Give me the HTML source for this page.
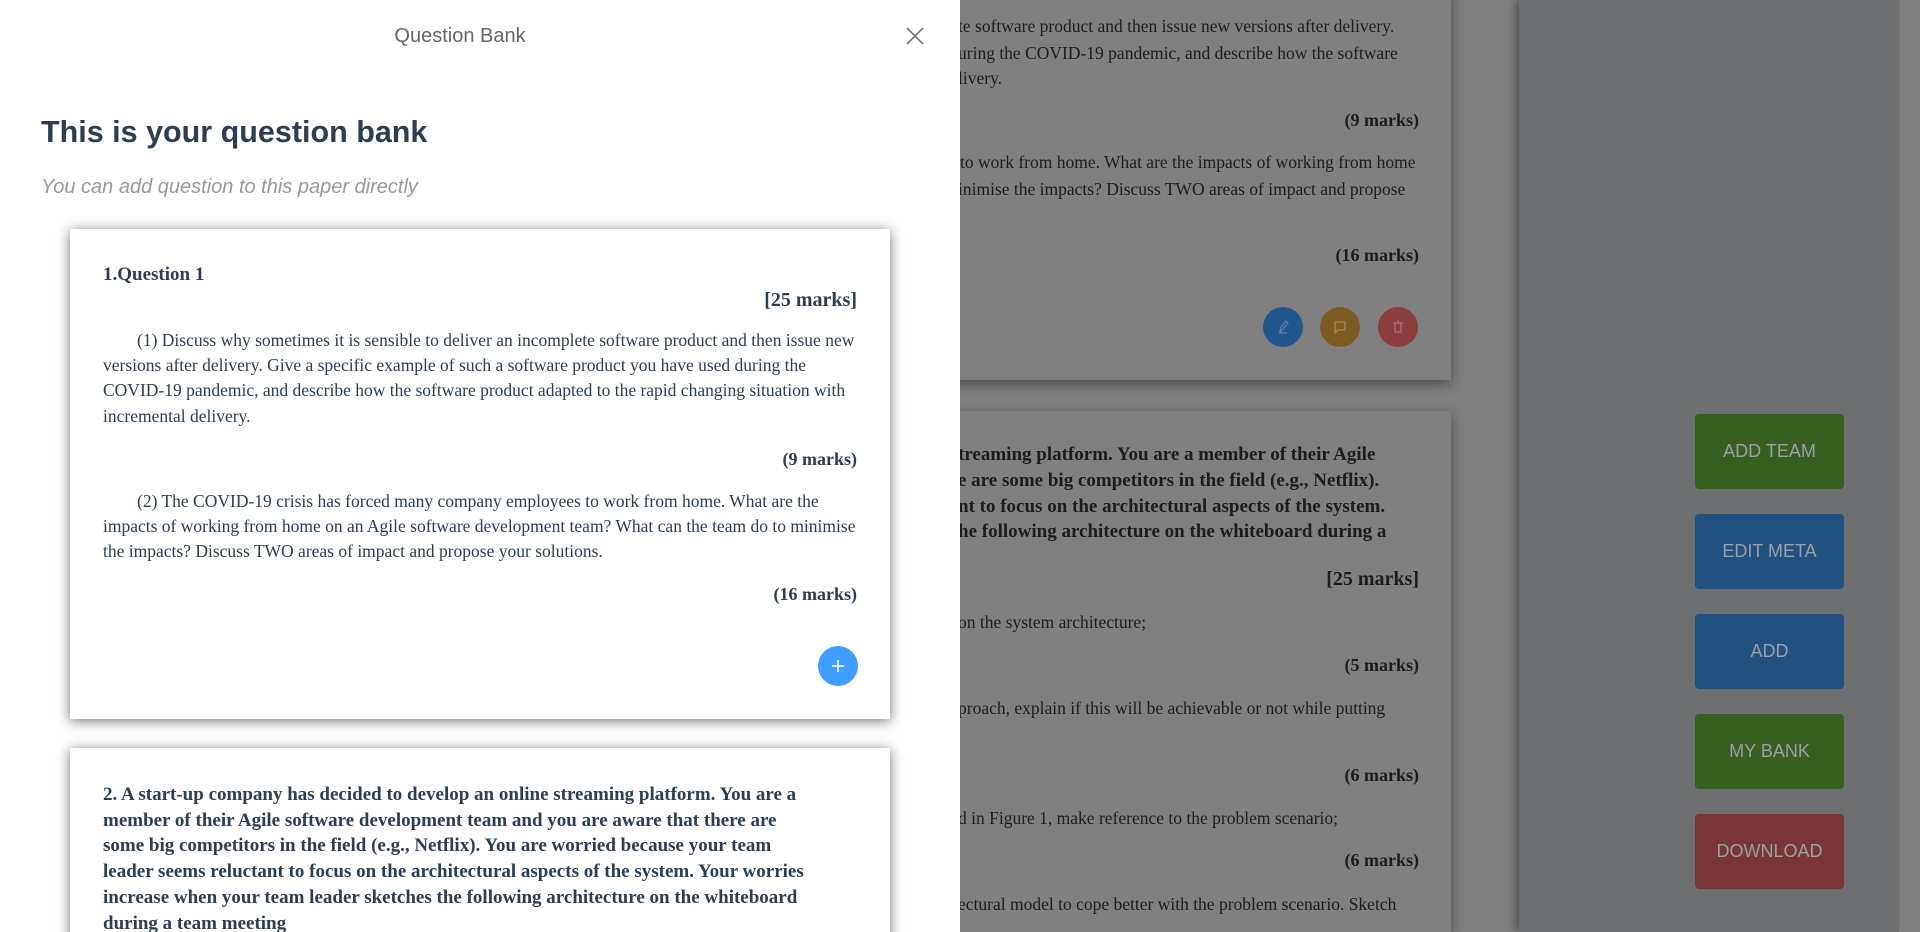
<!DOCTYPE html>
<html style="overflow:hidden;height:932px"><head><meta charset="utf-8"><style>
*{margin:0;padding:0;box-sizing:border-box}
body{width:1920px;height:932px;overflow:hidden;position:relative;background:#808080;font-family:"Liberation Serif",serif}
.abs{position:absolute;white-space:nowrap}
.dark{position:absolute;left:1519px;top:0;width:380px;height:932px;background:#6e6f71;box-shadow:-4px 0 8px rgba(0,0,0,.35)}
.paper{position:absolute;left:600px;width:851px;background:#808080;box-shadow:0 4px 12px rgba(0,0,0,.45)}
.pt{position:absolute;font-size:17.5px;color:#1c1c1c;white-space:nowrap}
.pb{font-weight:bold;font-size:18px}
.btn{position:absolute;left:1695px;width:149px;height:75px;border-radius:4px;color:#9aa0a6;font-family:"Liberation Sans",sans-serif;font-size:18px;display:flex;align-items:center;justify-content:center}
.circ{position:absolute;width:40px;height:40px;border-radius:50%;top:307px}
.modal{position:absolute;left:0;top:0;width:960px;height:932px;background:#fff;z-index:5;overflow:hidden}
.card{position:absolute;left:70px;width:820px;background:#fff;box-shadow:0 2px 12px rgba(0,0,0,.55)}
.ct{position:absolute;left:103px;font-size:17.5px;color:#2c3e50;white-space:nowrap}
</style></head><body>
<div class="dark"></div>
<div class="paper" style="top:-10px;height:390px"></div>
<div class="paper" style="top:411px;height:521px"></div>

<div class="pt" style="left:958px;top:16px">te software product and then issue new versions after delivery.</div>
<div class="pt" style="left:958px;top:43px">uring the COVID-19 pandemic, and describe how the software</div>
<div class="pt" style="left:958px;top:68px">livery.</div>
<div class="pt pb" style="right:501px;top:110px">(9 marks)</div>
<div class="pt" style="left:960px;top:152px">to work from home. What are the impacts of working from home</div>
<div class="pt" style="left:958px;top:179px">inimise the impacts? Discuss TWO areas of impact and propose</div>
<div class="pt pb" style="right:501px;top:245px">(16 marks)</div>
<div class="circ" style="left:1263px;background:#22568f"><svg width="40" height="40" viewBox="0 0 40 40"><path d="M17 25l1-5 5-6 2 2-5 6z M16 26h8" stroke="#5b7fa8" stroke-width="1.3" fill="none"/></svg></div>
<div class="circ" style="left:1320px;background:#7d5a22"><svg width="40" height="40" viewBox="0 0 40 40"><path d="M15 15h10v8h-7l-3 3z" stroke="#a88a50" stroke-width="1.3" fill="none"/></svg></div>
<div class="circ" style="left:1378px;background:#8c3e3e"><svg width="40" height="40" viewBox="0 0 40 40"><path d="M15 16h10M17 16v9h6v-9M19 14h2" stroke="#b07070" stroke-width="1.3" fill="none"/></svg></div>

<div class="pt pb" style="left:958px;top:444px;font-size:19px">treaming platform. You are a member of their Agile</div>
<div class="pt pb" style="left:958px;top:470px;font-size:19px">e are some big competitors in the field (e.g., Netflix).</div>
<div class="pt pb" style="left:958px;top:496px;font-size:19px">nt to focus on the architectural aspects of the system.</div>
<div class="pt pb" style="left:958px;top:521px;font-size:19px">he following architecture on the whiteboard during a</div>
<div class="pt pb" style="right:501px;top:568px;font-size:20px">[25 marks]</div>
<div class="pt" style="left:958px;top:612px">on the system architecture;</div>
<div class="pt pb" style="right:501px;top:655px">(5 marks)</div>
<div class="pt" style="left:958px;top:698px">proach, explain if this will be achievable or not while putting</div>
<div class="pt pb" style="right:501px;top:765px">(6 marks)</div>
<div class="pt" style="left:958px;top:808px">d in Figure 1, make reference to the problem scenario;</div>
<div class="pt pb" style="right:501px;top:850px">(6 marks)</div>
<div class="pt" style="left:958px;top:894px">ectural model to cope better with the problem scenario. Sketch</div>

<div class="btn" style="top:414px;background:#356020">ADD TEAM</div>
<div class="btn" style="top:514px;background:#22507f">EDIT META</div>
<div class="btn" style="top:614px;background:#22507f">ADD</div>
<div class="btn" style="top:714px;background:#356020">MY BANK</div>
<div class="btn" style="top:814px;background:#7a3636">DOWNLOAD</div>

<div class="modal">
<div class="abs" style="left:0;width:920px;text-align:center;top:25px;font-family:'Liberation Sans',sans-serif;font-size:20px;color:#666">Question Bank</div>
<svg class="abs" style="left:905px;top:26px" width="20" height="20" viewBox="0 0 20 20"><path d="M2 2L18 18M18 2L2 18" stroke="#777" stroke-width="1.6"/></svg>
<div class="abs" style="left:41px;top:115px;font-family:'Liberation Sans',sans-serif;font-size:30.5px;font-weight:bold;color:#2c3e50">This is your question bank</div>
<div class="abs" style="left:41px;top:176px;font-family:'Liberation Sans',sans-serif;font-size:20px;font-style:italic;color:#999">You can add question to this paper directly</div>

<div class="card" style="top:229px;height:490px"></div>
<div class="ct" style="top:264px;font-weight:bold;font-size:19px">1.Question 1</div>
<div class="ct" style="left:auto;right:103px;top:289px;font-weight:bold;font-size:20px">[25 marks]</div>
<div class="ct" style="top:330px;left:137px">(1) Discuss why sometimes it is sensible to deliver an incomplete software product and then issue new</div>
<div class="ct" style="top:355px">versions after delivery. Give a specific example of such a software product you have used during the</div>
<div class="ct" style="top:380px">COVID-19 pandemic, and describe how the software product adapted to the rapid changing situation with</div>
<div class="ct" style="top:406px">incremental delivery.</div>
<div class="ct" style="left:auto;right:103px;top:449px;font-weight:bold;font-size:18px">(9 marks)</div>
<div class="ct" style="top:491px;left:137px">(2) The COVID-19 crisis has forced many company employees to work from home. What are the</div>
<div class="ct" style="top:516px">impacts of working from home on an Agile software development team? What can the team do to minimise</div>
<div class="ct" style="top:541px">the impacts? Discuss TWO areas of impact and propose your solutions.</div>
<div class="ct" style="left:auto;right:103px;top:584px;font-weight:bold;font-size:18px">(16 marks)</div>
<div class="abs" style="left:818px;top:646px;width:40px;height:40px;border-radius:50%;background:#409eff"><svg width="40" height="40" viewBox="0 0 40 40"><path d="M20 14v12M14 20h12" stroke="#fff" stroke-width="1.6"/></svg></div>

<div class="card" style="top:748px;height:200px"></div>
<div class="ct" style="top:782px;font-weight:bold;font-size:19px;line-height:25.7px">2. A start-up company has decided to develop an online streaming platform. You are a<br>member of their Agile software development team and you are aware that there are<br>some big competitors in the field (e.g., Netflix). You are worried because your team<br>leader seems reluctant to focus on the architectural aspects of the system. Your worries<br>increase when your team leader sketches the following architecture on the whiteboard<br>during a team meeting</div>
</div>
</body></html>
